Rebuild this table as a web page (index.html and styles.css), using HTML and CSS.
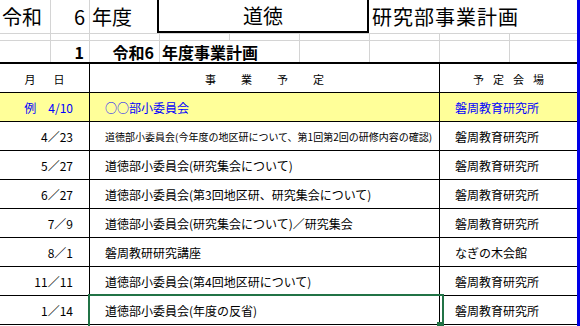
FILE: index.html
```html
<!DOCTYPE html>
<html lang="ja">
<head>
<meta charset="utf-8">
<title>研究部事業計画</title>
<link rel="stylesheet" href="styles.css">
</head>
<body>
<div class="sheet">
  <div class="main">
    <div class="row r1">
      <div class="cell w51 pl2">令和</div>
      <div class="cell w39 right pr4">6</div>
      <div class="cell w67 noline pl2">年度</div>
      <div class="box">道徳</div>
      <div class="title">研究部事業計画</div>
    </div>
    <div class="row r2">
      <div class="cell w51"></div>
      <div class="cell w39"></div>
      <div class="cell w70"></div>
      <div class="cell w70"></div>
      <div class="cell w70"></div>
      <div class="cell w70"></div>
      <div class="cell w70"></div>
      <div class="cell w70"></div>
      <div class="cell fill"></div>
    </div>
    <div class="row r3">
      <div class="cell w51"></div>
      <div class="cell w39 right pr5">1</div>
      <div class="cell w70 right pr5">令和6</div>
      <div class="cell w140 pl2">年度事業計画</div>
      <div class="cell w70"></div>
      <div class="cell w70"></div>
      <div class="cell w70"></div>
      <div class="cell fill"></div>
    </div>
    <div class="tbl">
      <div class="trow head">
        <div class="td1 sp1"><span>月</span><span>日</span></div>
        <div class="td2 sp2"><span>事</span><span>業</span><span>予</span><span>定</span></div>
        <div class="td3 sp3"><span>予</span><span>定</span><span>会</span><span>場</span></div>
      </div>
      <div class="trow ex">
        <div class="td1">例　4/10</div>
        <div class="td2">○○部小委員会</div>
        <div class="td3">磐周教育研究所</div>
      </div>
      <div class="trow">
        <div class="td1">4／23</div>
        <div class="td2 small">道徳部小委員会(今年度の地区研について、第1回第2回の研修内容の確認)</div>
        <div class="td3">磐周教育研究所</div>
      </div>
      <div class="trow">
        <div class="td1">5／27</div>
        <div class="td2">道徳部小委員会(研究集会について)</div>
        <div class="td3">磐周教育研究所</div>
      </div>
      <div class="trow">
        <div class="td1">6／27</div>
        <div class="td2">道徳部小委員会(第3回地区研、研究集会について)</div>
        <div class="td3">磐周教育研究所</div>
      </div>
      <div class="trow">
        <div class="td1">7／9</div>
        <div class="td2">道徳部小委員会(研究集会について)／研究集会</div>
        <div class="td3">磐周教育研究所</div>
      </div>
      <div class="trow">
        <div class="td1">8／1</div>
        <div class="td2">磐周教研研究講座</div>
        <div class="td3">なぎの木会館</div>
      </div>
      <div class="trow">
        <div class="td1">11／11</div>
        <div class="td2">道徳部小委員会(第4回地区研について)</div>
        <div class="td3">磐周教育研究所</div>
      </div>
      <div class="trow">
        <div class="td1">1／14</div>
        <div class="td2 sel">道徳部小委員会(年度の反省)</div>
        <div class="td3">磐周教育研究所</div>
      </div>
    </div>
  </div>
  <div class="bar"></div>
</div>
</body>
</html>
```

FILE: styles.css
```css
* { box-sizing: border-box; }
html, body { margin: 0; padding: 0; background: #fff; }
body {
  font-family: "Noto Sans CJK JP", "Noto Sans", sans-serif;
  color: #000;
  line-height: 1;
}
.sheet { display: flex; width: 580px; height: 326px; overflow: hidden; }
.main { width: 577px; flex: none; }
.bar { width: 3px; flex: none; background: #0000e6; }

.row { display: flex; border-bottom: 1px solid #d4d4d4; }
.r1 { height: 34px; font-size: 20px; }
.r2 { height: 7px; }
.r3 { height: 23px; border-bottom: 2px solid #000; font-size: 16px; font-weight: 700; }

.cell {
  flex: none;
  display: flex;
  align-items: center;
  border-right: 1px solid #d4d4d4;
  white-space: nowrap;
}
.r1 .cell { height: 33px; }
.w51 { width: 51px; }
.w39 { width: 39px; }
.w67 { width: 67px; }
.w70 { width: 70px; }
.w140 { width: 140px; }
.fill { flex: 1; border-right: none; }
.noline { border-right: none; }
.right { justify-content: flex-end; }
.pl2 { padding-left: 2px; }
.pr4 { padding-right: 4px; }
.pr5 { padding-right: 5px; }

.box {
  flex: none;
  width: 212px;
  height: 33px;
  border: 2px solid #000;
  border-top: none;
  display: flex;
  align-items: center;
  justify-content: center;
}
.title {
  flex: 1;
  height: 33px;
  display: flex;
  align-items: center;
  padding-left: 3px;
  letter-spacing: 1px;
  white-space: nowrap;
}

.tbl { font-size: 12px; }
.trow { display: flex; height: 29px; border-bottom: 1px solid #000; }
.trow > div { display: flex; align-items: center; white-space: nowrap; padding-top: 1px; }
.td1 { flex: none; width: 90px; border-right: 1px solid #000; justify-content: flex-end; padding-right: 16px; }
.td2 { flex: none; width: 350px; border-right: 1px solid #000; padding-left: 15px; }
.td3 { flex: 1; padding-left: 15px; }
.small { font-size: 10px; }

.ex { background: #ffff99; color: #0000ff; }

.head { font-size: 11px; }
.head .td1, .head .td2, .head .td3 { justify-content: center; padding-left: 0; padding-right: 0; padding-top: 2px; }
.sp1 { gap: 18px; }
.sp2 { gap: 25px; }
.sp3 { gap: 9px; }

.sel { position: relative; }
.sel::after {
  content: "";
  position: absolute;
  left: -2px;
  top: -2px;
  width: 352px;
  height: 31px;
  border: 2px solid #217346;
}
.sel::before {
  content: "";
  position: absolute;
  left: 347px;
  top: 26px;
  width: 5px;
  height: 5px;
  background: #217346;
  z-index: 1;
}
```
